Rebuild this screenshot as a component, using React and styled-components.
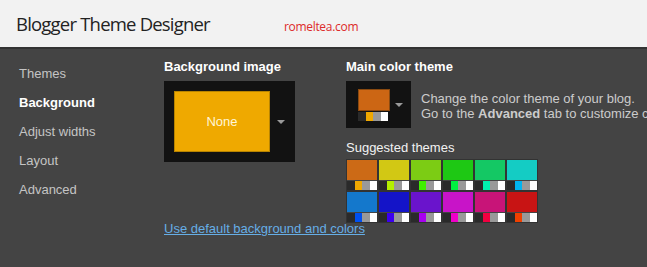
import React from 'react'
import styled, { createGlobalStyle } from 'styled-components'

const GlobalStyle = createGlobalStyle`
  html, body {
    margin: 0;
    padding: 0;
    background: #444444;
    overflow: hidden;
  }
  body {
    font-family: 'Liberation Sans', Arial, sans-serif;
    font-size: 13px;
  }
`

const navItems = ['Themes', 'Background', 'Adjust widths', 'Layout', 'Advanced']

const themes = [
  { main: '#cc6a16', accent: '#f0a800' },
  { main: '#d2c814', accent: '#b4f000' },
  { main: '#7ccc14', accent: '#40f000' },
  { main: '#1ec814', accent: '#00f040' },
  { main: '#14c864', accent: '#00f0b0' },
  { main: '#14ccc4', accent: '#00b4f0' },
  { main: '#1478cc', accent: '#0050f0' },
  { main: '#1414c8', accent: '#3c00f0' },
  { main: '#6a14cc', accent: '#a800f0' },
  { main: '#c814c8', accent: '#f000c8' },
  { main: '#c81478', accent: '#f00040' },
  { main: '#c81414', accent: '#f04000' },
]

const Swatch = ({ main, accent, big }) => (
  <SwatchWrap>
    <SwatchMain $color={main} $big={big} />
    <Palette>
      <PaletteCell $color='#2a2a2a' />
      <PaletteCell $color={accent} />
      <PaletteCell $color='#999999' />
      <PaletteCell $color='#ffffff' />
    </Palette>
  </SwatchWrap>
)

const App = () => {
  return (
    <>
      <GlobalStyle />
      <Header>
        <Title>Blogger Theme Designer</Title>
        <Watermark>romeltea.com</Watermark>
      </Header>
      <Main>
        <Sidebar>
          {navItems.map((item) => (
            <NavItem key={item} $active={item === 'Background'}>
              {item}
            </NavItem>
          ))}
        </Sidebar>
        <Content>
          <BgColumn>
            <Label>Background image</Label>
            <BgPicker>
              <BgPreview>None</BgPreview>
              <Arrow />
            </BgPicker>
            <DefaultLink href='#'>Use default background and colors</DefaultLink>
          </BgColumn>
          <ThemeColumn>
            <Label>Main color theme</Label>
            <ThemeRow>
              <ThemePicker>
                <Swatch main='#cc6614' accent='#f0a800' big />
                <Arrow />
              </ThemePicker>
              <Description>
                Change the color theme of your blog.
                <br />
                Go to the <b>Advanced</b> tab to customize colors and fonts.
              </Description>
            </ThemeRow>
            <SubLabel>Suggested themes</SubLabel>
            <ThemeGrid>
              {themes.map((t, i) => (
                <ThemeCell key={i}>
                  <Swatch main={t.main} accent={t.accent} />
                </ThemeCell>
              ))}
            </ThemeGrid>
          </ThemeColumn>
        </Content>
      </Main>
    </>
  )
}

const Header = styled.div`
  background: #f2f2f2;
  border-bottom: 2px solid #333333;
  display: flex;
  align-items: baseline;
  padding: 10px 0 0 16px;
  box-sizing: border-box;
  height: 49px;
`
const Title = styled.div`
  font-family: 'Open Sans', 'Liberation Sans', sans-serif;
  font-size: 18.5px;
  line-height: 28px;
  color: #222222;
  letter-spacing: -0.8px;
`
const Watermark = styled.div`
  font-family: 'Open Sans', 'Liberation Sans', sans-serif;
  font-size: 12px;
  color: #dd2a2a;
  letter-spacing: -0.3px;
  margin-left: 74px;
`
const Main = styled.div`
  display: flex;
  white-space: nowrap;
`
const Sidebar = styled.div`
  width: 164px;
  flex: none;
  padding-top: 10px;
`
const NavItem = styled.div`
  padding-left: 19px;
  line-height: 29px;
  font-size: 13px;
  color: ${(p) => (p.$active ? '#ffffff' : '#c4c4c4')};
  font-weight: ${(p) => (p.$active ? 700 : 400)};
`
const Content = styled.div`
  display: flex;
  padding-top: 10px;
`
const BgColumn = styled.div`
  width: 182px;
  flex: none;
  display: flex;
  flex-direction: column;
  align-items: flex-start;
`
const ThemeColumn = styled.div`
  display: flex;
  flex-direction: column;
`
const Label = styled.div`
  font-weight: 700;
  color: #ffffff;
  line-height: 16px;
  margin-bottom: 6px;
`
const BgPicker = styled.div`
  width: 131px;
  height: 81px;
  box-sizing: border-box;
  background: #121212;
  padding: 10px;
  display: flex;
  align-items: center;
  gap: 7px;
`
const BgPreview = styled.div`
  width: 102px;
  height: 61px;
  box-sizing: border-box;
  align-self: flex-start;
  background: #efa900;
  border: 1px solid #b88400;
  color: #fff6d8;
  display: flex;
  align-items: center;
  justify-content: center;
  font-size: 13px;
`
const Arrow = styled.div`
  width: 0;
  height: 0;
  border-left: 4px solid transparent;
  border-right: 4px solid transparent;
  border-top: 4px solid #9a9a9a;
`
const DefaultLink = styled.a`
  margin-top: 59px;
  color: #66aee6;
  line-height: 16px;
  text-decoration: underline;
`
const ThemeRow = styled.div`
  display: flex;
  align-items: flex-start;
  gap: 10px;
`
const ThemePicker = styled.div`
  width: 65px;
  height: 47px;
  box-sizing: border-box;
  background: #121212;
  padding: 8px 0 0 12px;
  display: flex;
  align-items: flex-start;
  gap: 7px;
  & > div:last-child {
    margin-top: 14px;
  }
`
const Description = styled.div`
  color: #cccccc;
  line-height: 15px;
  padding-top: 10px;
  b {
    font-weight: 700;
  }
`
const SubLabel = styled.div`
  color: #f2f2f2;
  line-height: 16px;
  margin: 12px 0 3px;
`
const ThemeGrid = styled.div`
  display: grid;
  grid-template-columns: repeat(6, 32px);
`
const ThemeCell = styled.div`
  border: 1px solid #333333;
`
const SwatchWrap = styled.div`
  width: 30px;
  display: flex;
  flex-direction: column;
  gap: 1px;
`
const SwatchMain = styled.div`
  height: ${(p) => (p.$big ? '22px' : '20px')};
  background: ${(p) => p.$color};
  ${(p) => (p.$big ? 'width: 32px; box-sizing: border-box; border: 1px solid #8a4a10;' : '')}
`
const Palette = styled.div`
  display: grid;
  grid-template-columns: repeat(4, 1fr);
  height: 9px;
`
const PaletteCell = styled.div`
  background: ${(p) => p.$color};
`

export default App
